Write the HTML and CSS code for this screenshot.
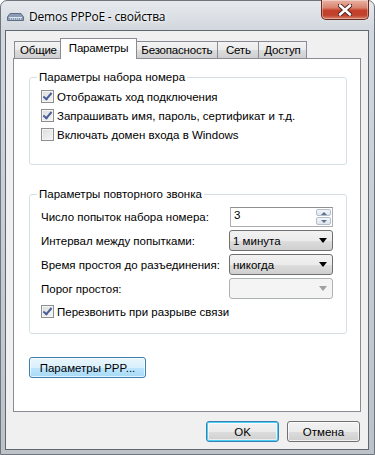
FILE: index.html
```html
<!DOCTYPE html>
<html lang="ru">
<head>
  <meta charset="UTF-8">
  <title>Demos PPPoE - свойства</title>
  <link rel="stylesheet" href="styles.css">
</head>
<body>

  <div class="window">
    <!-- Заголовок окна -->
    <div class="titlebar">
      <svg class="app-icon" width="17" height="8" viewBox="0 0 17 8">
        <path d="M3 0.5 H14 L16.5 4 V7.5 H0.5 V4 Z" fill="#8a9bb3" stroke="#5d6f88"/>
        <path d="M2 4.5 H15" stroke="#dfe7f2"/>
        <path d="M3 6 H4 M5 6 H6 M7 6 H8 M9 6 H10 M11 6 H12 M13 6 H14" stroke="#eef3fa"/>
      </svg>
      <span class="title">Demos PPPoE - свойства</span>
      <div class="close">
        <svg width="14" height="12" viewBox="0 0 14 12">
          <path d="M2 1.5 L12 10.5 M12 1.5 L2 10.5" stroke="#4b2019" stroke-width="4.4" stroke-linecap="round"/>
          <path d="M2 1.5 L12 10.5 M12 1.5 L2 10.5" stroke="#ffffff" stroke-width="2.6" stroke-linecap="round"/>
        </svg>
      </div>
    </div>

    <div class="client">
      <div class="tabs">
        <div class="tab">Общие</div>
        <div class="tab active">Параметры</div>
        <div class="tab">Безопасность</div>
        <div class="tab">Сеть</div>
        <div class="tab">Доступ</div>
      </div>

      <div class="panel">
        <!-- Параметры набора номера -->
        <fieldset class="group group-dial">
          <legend>Параметры набора номера</legend>
          <label class="check-row"><span class="check checked"></span>Отображать ход подключения</label>
          <label class="check-row"><span class="check checked"></span>Запрашивать имя, пароль, сертификат и т.д.</label>
          <label class="check-row"><span class="check"></span>Включать домен входа в Windows</label>
        </fieldset>

        <!-- Параметры повторного звонка -->
        <fieldset class="group group-redial">
          <legend>Параметры повторного звонка</legend>
          <div class="field-row">
            <span class="field-label">Число попыток набора номера:</span>
            <div class="spin">
              <span class="spin-value">3</span>
              <div class="spin-buttons">
                <span class="spin-btn up"></span>
                <span class="spin-btn down"></span>
              </div>
            </div>
          </div>
          <div class="field-row">
            <span class="field-label">Интервал между попытками:</span>
            <div class="combo"><span>1 минута</span><span class="arrow"></span></div>
          </div>
          <div class="field-row">
            <span class="field-label">Время простоя до разъединения:</span>
            <div class="combo"><span>никогда</span><span class="arrow"></span></div>
          </div>
          <div class="field-row">
            <span class="field-label">Порог простоя:</span>
            <div class="combo disabled"><span></span><span class="arrow"></span></div>
          </div>
          <label class="check-row"><span class="check checked"></span>Перезвонить при разрыве связи</label>
        </fieldset>

        <button class="btn btn-focus btn-ppp">Параметры PPP...</button>
      </div>

      <div class="footer">
        <button class="btn btn-default">OK</button>
        <button class="btn">Отмена</button>
      </div>
    </div>
  </div>

</body>
</html>
```

FILE: styles.css
```css
* {
  box-sizing: border-box;
}

body {
  margin: 0;
  font-family: "Liberation Sans", Arial, sans-serif;
  font-size: 11.5px;
  color: #000;
  background-color: #fff;
}

.window {
  width: 375px;
  height: 455px;
  padding: 0 5px 4px 4px;
  border: 1px solid #6f757c;
  border-radius: 7px 7px 0 0;
  background: linear-gradient(#e6eaef, #d3d8de 28px, #c6cbd2 60%, #bdc2c9);
}

/* Заголовок */
.titlebar {
  display: flex;
  align-items: flex-start;
  height: 29px;
}

.app-icon {
  margin: 12px 5px 0 2px;
}

.title {
  margin-top: 7px;
  font-family: "Open Sans", sans-serif;
  font-size: 12px;
  letter-spacing: -0.2px;
  text-shadow: 0 0 6px #fff, 0 0 3px #fff;
}

.close {
  display: flex;
  align-items: center;
  justify-content: center;
  width: 48px;
  height: 20px;
  margin: -1px 0 0 auto;
  border: 1px solid #6b2a20;
  border-top: none;
  border-radius: 0 0 5px 5px;
  background: linear-gradient(#eab3a4, #d98470 40%, #c5402a 55%, #c0412c 80%, #d9826c);
  box-shadow: inset 0 0 0 1px rgba(255, 255, 255, 0.35);
}

/* Клиентская область */
.client {
  height: 420px;
  border: 1px solid #5f6770;
  background-color: #f0f0f0;
}

.tabs {
  display: flex;
  align-items: flex-end;
  height: 27px;
  padding-left: 9px;
}

.tab {
  min-width: 42px;
  height: 17px;
  padding: 0 5px;
  line-height: 17px;
  text-align: center;
  letter-spacing: -0.2px;
  border: 1px solid #898c95;
  border-bottom: none;
  margin-left: -1px;
  background: linear-gradient(#f3f3f3, #ebebeb 50%, #dddddd 51%, #cfcfcf);
  white-space: nowrap;
}

.tab.active {
  position: relative;
  z-index: 1;
  height: 21px;
  margin: 0 -2px -1px -3px;
  padding: 0 8px;
  line-height: 18px;
  background: #fff;
}

.tab.active + .tab {
  margin-left: 0;
}

.panel {
  height: 354px;
  margin: 0 7px;
  padding: 11px 13px 0 15px;
  border: 1px solid #898c95;
  background-color: #fff;
}

/* Группы */
.group {
  margin: 0;
  padding: 0 13px 0 11px;
  border: 1px solid #d5dfe5;
  border-radius: 3px;
}

.group legend {
  margin-left: -4px;
  padding: 0 2px;
  line-height: 14px;
}

.group-dial {
  height: 95px;
  padding-top: 3px;
}

.group-redial {
  height: 147px;
  margin-top: 22px;
  padding-top: 5px;
}

.check-row {
  display: flex;
  align-items: center;
  height: 19px;
  white-space: nowrap;
}

.check {
  position: relative;
  flex: none;
  width: 13px;
  height: 13px;
  margin-right: 3px;
  border: 1px solid #8e8f8f;
  background: linear-gradient(135deg, #dcdcdc, #f6f6f6);
  box-shadow: inset 0 0 0 1px #f4f4f4;
}

.check.checked::after {
  content: "";
  position: absolute;
  left: 3px;
  top: 0;
  width: 3px;
  height: 7px;
  border: solid #4a5f97;
  border-width: 0 2px 2px 0;
  transform: rotate(40deg);
}

.field-row {
  display: flex;
  align-items: center;
  justify-content: space-between;
  height: 21px;
  margin-bottom: 3px;
  white-space: nowrap;
}

.group-redial .check-row {
  margin-top: 2px;
}

.spin {
  display: flex;
  width: 103px;
  height: 20px;
  border: 1px solid #abadb3;
  border-top-color: #8e8f8f;
  background-color: #fff;
}

.spin-value {
  flex: 1;
  padding: 0 3px;
  line-height: 15px;
}

.spin-buttons {
  display: flex;
  flex-direction: column;
  gap: 1px;
  width: 16px;
  padding: 1px 1px 1px 0;
}

.spin-btn {
  position: relative;
  flex: 1;
  border: 1px solid #b3bfcc;
  border-radius: 2px;
  background: linear-gradient(#f4f6f9, #dfe5ec);
}

.spin-btn::after {
  content: "";
  position: absolute;
  left: 4px;
  border-left: 3px solid transparent;
  border-right: 3px solid transparent;
}

.spin-btn.up::after {
  top: 2px;
  border-bottom: 3px solid #5e7394;
}

.spin-btn.down::after {
  top: 2px;
  border-top: 3px solid #5e7394;
}

.combo {
  display: flex;
  align-items: center;
  justify-content: space-between;
  width: 104px;
  height: 21px;
  padding: 0 5px 0 3px;
  border: 1px solid #707070;
  border-radius: 3px;
  background: linear-gradient(#f2f2f2, #ebebeb 50%, #dddddd 51%, #cfcfcf);
}

.arrow {
  border-left: 4px solid transparent;
  border-right: 4px solid transparent;
  border-top: 5px solid #000;
}

.combo.disabled {
  border-color: #adb2b5;
  background: #f4f4f4;
}

.combo.disabled .arrow {
  border-top-color: #a0a0a0;
}

/* Кнопки */
.btn {
  height: 21px;
  padding: 0;
  font-family: inherit;
  font-size: 11.5px;
  color: #000;
  border: 1px solid #707070;
  border-radius: 3px;
  background: linear-gradient(#f2f2f2, #ebebeb 50%, #dddddd 51%, #cfcfcf);
  box-shadow: inset 0 0 0 1px rgba(255, 255, 255, 0.7);
}

.btn-ppp {
  width: 117px;
  margin-top: 23px;
}

.btn-focus {
  border-color: #3c7fb1;
  background: linear-gradient(#eaf6fd, #d9f0fc 50%, #bee6fd 51%, #a7d9f5);
}

.btn-default {
  border-color: #3c7fb1;
  box-shadow: inset 0 0 0 1px #48d0f7, inset 0 0 0 2px rgba(255, 255, 255, 0.6);
}

.footer {
  display: flex;
  justify-content: flex-end;
  gap: 8px;
  padding: 9px 8px 0 0;
}

.footer .btn {
  width: 73px;
}
```
